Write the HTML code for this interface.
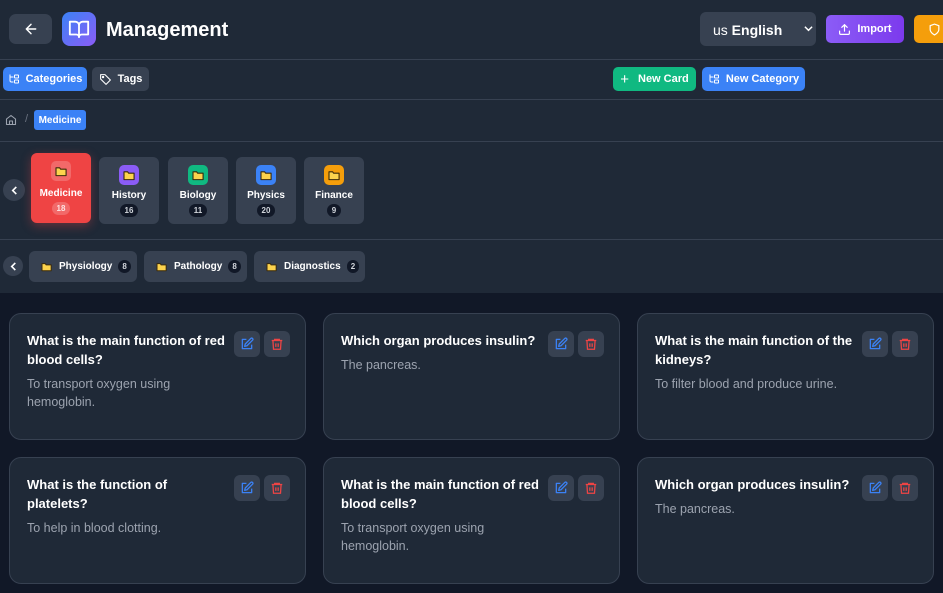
<!DOCTYPE html>
<html><head><meta charset="utf-8"><style>
*{box-sizing:border-box;margin:0;padding:0}
body{width:943px;height:593px;overflow:hidden;background:#111827;font-family:"Liberation Sans",sans-serif;color:#fff;position:relative}
.a{position:absolute}
.top{left:0;top:0;width:943px;height:293px;background:#1f2937}
.hl{left:0;width:943px;height:1px;background:#374151}
.btn{position:absolute;display:flex;align-items:center;justify-content:center;gap:6px;border-radius:5px;font-size:11px;font-weight:bold;color:#fff}
.cat{position:absolute;top:157px;width:60px;height:67px;background:#374151;border-radius:6px;text-align:center;font-size:10px;font-weight:bold}
.cat .ic{width:20px;height:20px;border-radius:5px;margin:8px auto 0;display:flex;align-items:center;justify-content:center}
.cat .nm{margin-top:5px}
.cat .ct{display:inline-block;margin-top:3px;background:#111827;border-radius:8px;font-size:8px;padding:2px 5px;color:#d1d5db}
.chip{position:absolute;top:251px;height:31px;background:#374151;border-radius:6px;display:flex;align-items:center;padding-left:12px;gap:6px;font-size:10px;font-weight:bold}
.chip .ct{background:#111827;border-radius:7px;font-size:8px;padding:2px 4px;color:#d1d5db}
.card{position:absolute;width:297px;background:#1f2937;border:1px solid #374151;border-radius:12px}
.card h3{position:absolute;left:17px;top:18px;width:210px;font-size:13px;line-height:18.5px;font-weight:bold;color:#fff}
.card p{position:absolute;left:17px;font-size:12.5px;line-height:18px;color:#9ca3af;width:200px}
.ib{position:absolute;top:17px;width:26px;height:26px;background:#374151;border-radius:6px;display:flex;align-items:center;justify-content:center}
.circ{position:absolute;border-radius:50%;background:#374151;display:flex;align-items:center;justify-content:center}
</style></head><body>
<div class="a top"></div>
<div class="a hl" style="top:59px"></div>
<div class="a hl" style="top:99px"></div>
<div class="a hl" style="top:141px"></div>
<div class="a hl" style="top:239px"></div>

<div class="btn" style="left:9px;top:14px;width:43px;height:30px;background:#374151;border-radius:7px"><svg width="16" height="16" viewBox="0 0 24 24" fill="none" stroke="#fff" stroke-width="2.2" stroke-linecap="round" stroke-linejoin="round"><path d="M19 12H5M12 19l-7-7 7-7"/></svg></div>
<div class="btn" style="left:62px;top:12px;width:34px;height:34px;border-radius:8px;background:linear-gradient(135deg,#3b82f6,#8b5cf6)"><svg width="22" height="22" viewBox="0 0 24 24" fill="none" stroke="#fff" stroke-width="2" stroke-linejoin="round"><path d="M2 4h6a4 4 0 0 1 4 4v13a3 3 0 0 0-3-3H2zM22 4h-6a4 4 0 0 0-4 4v13a3 3 0 0 1 3-3h7z"/></svg></div>
<div class="a" style="left:106px;top:19px;font-size:20px;font-weight:bold">Management</div>

<div class="a" style="left:700px;top:12px;width:116px;height:34px;background:#374151;border-radius:6px;font-size:14px;font-weight:bold;padding:10px 0 0 13px"><span style="font-weight:normal">us</span> English<svg class="a" style="left:104px;top:13px" width="9" height="7" viewBox="0 0 10 6" fill="none" stroke="#fff" stroke-width="1.6"><path d="M1 1l4 4 4-4"/></svg></div>
<div class="btn" style="left:826px;top:15px;width:78px;height:28px;background:linear-gradient(90deg,#8b5cf6,#7c3aed)"><svg width="13" height="13" viewBox="0 0 24 24" fill="none" stroke="#fff" stroke-width="2.2" stroke-linecap="round" stroke-linejoin="round"><path d="M21 15v4a2 2 0 0 1-2 2H5a2 2 0 0 1-2-2v-4M17 8l-5-5-5 5M12 3v12"/></svg>Import</div>
<div class="btn" style="left:914px;top:15px;width:40px;height:28px;background:#f59e0b;justify-content:flex-start;padding-left:14px"><svg width="13" height="13" viewBox="0 0 24 24" fill="none" stroke="#fff" stroke-width="2.2"><path d="M12 22s8-4 8-10V5l-8-3-8 3v7c0 6 8 10 8 10z"/></svg></div>

<div class="btn" style="left:3px;top:67px;width:84px;height:24px;background:#3b82f6"><svg width="12" height="12" viewBox="0 0 24 24" fill="none" stroke="#fff" stroke-width="2"><path d="M4 3v12a3 3 0 0 0 3 3h4M4 8h7"/><rect x="13" y="4" width="8" height="6" rx="1"/><rect x="13" y="14" width="8" height="6" rx="1"/></svg>Categories</div>
<div class="btn" style="left:92px;top:67px;width:57px;height:24px;background:#374151"><svg width="13" height="13" viewBox="0 0 24 24" fill="none" stroke="#fff" stroke-width="2" stroke-linejoin="round"><path d="M3 3h8l10 10-8 8L3 11z"/><circle cx="7.5" cy="7.5" r="1.2" fill="#fff"/></svg>Tags</div>
<div class="btn" style="left:613px;top:67px;width:83px;height:24px;background:#10b981"><span style="font-size:15px;font-weight:normal;margin-right:3px">+</span>New Card</div>
<div class="btn" style="left:702px;top:67px;width:103px;height:24px;background:#3b82f6"><svg width="12" height="12" viewBox="0 0 24 24" fill="none" stroke="#fff" stroke-width="2"><path d="M4 3v12a3 3 0 0 0 3 3h4M4 8h7"/><rect x="13" y="4" width="8" height="6" rx="1"/><rect x="13" y="14" width="8" height="6" rx="1"/></svg>New Category</div>

<svg class="a" style="left:5px;top:114px" width="12" height="12" viewBox="0 0 24 24" fill="none" stroke="#9ca3af" stroke-width="2.2" stroke-linejoin="round"><path d="M3 10l9-7 9 7v11H3zM9 21v-7h6v7"/></svg>
<div class="a" style="left:25px;top:113px;font-size:11px;color:#6b7280">/</div>
<div class="btn" style="left:34px;top:110px;width:52px;height:20px;background:#3b82f6;font-size:10px;border-radius:3px">Medicine</div>

<div class="circ" style="left:3px;top:179px;width:22px;height:22px"><svg width="9" height="9" viewBox="0 0 10 10" fill="none" stroke="#fff" stroke-width="1.8"><path d="M7 1L3 5l4 4"/></svg></div>
<div class="cat" style="left:31px;top:153px;height:70px;background:#ef4444;box-shadow:0 3px 10px rgba(239,68,68,.35)"><div class="ic" style="background:rgba(255,255,255,.2);width:20px;height:20px;margin-top:8px"><svg width="13" height="11" viewBox="0 0 14 12"><path d="M1 2h4l1 1.5h6v7H1z" fill="#fcd34d" stroke="#3b2a0a" stroke-width="1.2" stroke-linejoin="round"/></svg></div><div class="nm" style="margin-top:7px">Medicine</div><div class="ct" style="background:rgba(255,255,255,.2);color:#fde2e2">18</div></div>
<div class="cat" style="left:99px"><div class="ic" style="background:#8b5cf6"><svg width="13" height="11" viewBox="0 0 14 12"><path d="M1 2h4l1 1.5h6v7H1z" fill="#fcd34d" stroke="#3b2a0a" stroke-width="1.2" stroke-linejoin="round"/></svg></div><div class="nm">History</div><div class="ct">16</div></div>
<div class="cat" style="left:168px"><div class="ic" style="background:#10b981"><svg width="13" height="11" viewBox="0 0 14 12"><path d="M1 2h4l1 1.5h6v7H1z" fill="#fcd34d" stroke="#3b2a0a" stroke-width="1.2" stroke-linejoin="round"/></svg></div><div class="nm">Biology</div><div class="ct">11</div></div>
<div class="cat" style="left:236px"><div class="ic" style="background:#3b82f6"><svg width="13" height="11" viewBox="0 0 14 12"><path d="M1 2h4l1 1.5h6v7H1z" fill="#fcd34d" stroke="#3b2a0a" stroke-width="1.2" stroke-linejoin="round"/></svg></div><div class="nm">Physics</div><div class="ct">20</div></div>
<div class="cat" style="left:304px"><div class="ic" style="background:#f59e0b"><svg width="13" height="11" viewBox="0 0 14 12"><path d="M1 2h4l1 1.5h6v7H1z" fill="#fcd34d" stroke="#3b2a0a" stroke-width="1.2" stroke-linejoin="round"/></svg></div><div class="nm">Finance</div><div class="ct">9</div></div>

<div class="circ" style="left:3px;top:256px;width:20px;height:20px"><svg width="9" height="9" viewBox="0 0 10 10" fill="none" stroke="#fff" stroke-width="1.8"><path d="M7 1L3 5l4 4"/></svg></div>
<div class="chip" style="left:29px;width:108px"><svg width="12" height="10" viewBox="0 0 14 12"><path d="M1 2h4l1 1.5h6v7H1z" fill="#fcd34d" stroke="#3b2a0a" stroke-width="1.2" stroke-linejoin="round"/></svg>Physiology<span class="ct">8</span></div>
<div class="chip" style="left:144px;width:103px"><svg width="12" height="10" viewBox="0 0 14 12"><path d="M1 2h4l1 1.5h6v7H1z" fill="#fcd34d" stroke="#3b2a0a" stroke-width="1.2" stroke-linejoin="round"/></svg>Pathology<span class="ct">8</span></div>
<div class="chip" style="left:254px;width:111px"><svg width="12" height="10" viewBox="0 0 14 12"><path d="M1 2h4l1 1.5h6v7H1z" fill="#fcd34d" stroke="#3b2a0a" stroke-width="1.2" stroke-linejoin="round"/></svg>Diagnostics<span class="ct">2</span></div>

<!-- cards -->
<div class="card" style="left:9px;top:313px;height:127px"><h3>What is the main function of red blood cells?</h3><p style="top:61px">To transport oxygen using hemoglobin.</p>
<div class="ib" style="left:224px"><svg width="14" height="14" viewBox="0 0 24 24" fill="none" stroke="#3b82f6" stroke-width="2.2" stroke-linejoin="round"><path d="M11 4H4v16h16v-7"/><path d="M18.5 2.5a2.1 2.1 0 0 1 3 3L12 15l-4 1 1-4z"/></svg></div>
<div class="ib" style="left:254px"><svg width="14" height="14" viewBox="0 0 24 24" fill="none" stroke="#ef4444" stroke-width="2.2"><path d="M3 6h18M8 6V4h8v2M5 6l1 15h12l1-15M10 11v6M14 11v6"/></svg></div></div>
<div class="card" style="left:323px;top:313px;height:127px"><h3>Which organ produces insulin?</h3><p style="top:42px">The pancreas.</p>
<div class="ib" style="left:224px"><svg width="14" height="14" viewBox="0 0 24 24" fill="none" stroke="#3b82f6" stroke-width="2.2" stroke-linejoin="round"><path d="M11 4H4v16h16v-7"/><path d="M18.5 2.5a2.1 2.1 0 0 1 3 3L12 15l-4 1 1-4z"/></svg></div>
<div class="ib" style="left:254px"><svg width="14" height="14" viewBox="0 0 24 24" fill="none" stroke="#ef4444" stroke-width="2.2"><path d="M3 6h18M8 6V4h8v2M5 6l1 15h12l1-15M10 11v6M14 11v6"/></svg></div></div>
<div class="card" style="left:637px;top:313px;height:127px"><h3>What is the main function of the kidneys?</h3><p style="top:61px;width:240px">To filter blood and produce urine.</p>
<div class="ib" style="left:224px"><svg width="14" height="14" viewBox="0 0 24 24" fill="none" stroke="#3b82f6" stroke-width="2.2" stroke-linejoin="round"><path d="M11 4H4v16h16v-7"/><path d="M18.5 2.5a2.1 2.1 0 0 1 3 3L12 15l-4 1 1-4z"/></svg></div>
<div class="ib" style="left:254px"><svg width="14" height="14" viewBox="0 0 24 24" fill="none" stroke="#ef4444" stroke-width="2.2"><path d="M3 6h18M8 6V4h8v2M5 6l1 15h12l1-15M10 11v6M14 11v6"/></svg></div></div>

<div class="card" style="left:9px;top:457px;height:127px"><h3 style="width:170px">What is the function of platelets?</h3><p style="top:61px">To help in blood clotting.</p>
<div class="ib" style="left:224px"><svg width="14" height="14" viewBox="0 0 24 24" fill="none" stroke="#3b82f6" stroke-width="2.2" stroke-linejoin="round"><path d="M11 4H4v16h16v-7"/><path d="M18.5 2.5a2.1 2.1 0 0 1 3 3L12 15l-4 1 1-4z"/></svg></div>
<div class="ib" style="left:254px"><svg width="14" height="14" viewBox="0 0 24 24" fill="none" stroke="#ef4444" stroke-width="2.2"><path d="M3 6h18M8 6V4h8v2M5 6l1 15h12l1-15M10 11v6M14 11v6"/></svg></div></div>
<div class="card" style="left:323px;top:457px;height:127px"><h3>What is the main function of red blood cells?</h3><p style="top:61px">To transport oxygen using hemoglobin.</p>
<div class="ib" style="left:224px"><svg width="14" height="14" viewBox="0 0 24 24" fill="none" stroke="#3b82f6" stroke-width="2.2" stroke-linejoin="round"><path d="M11 4H4v16h16v-7"/><path d="M18.5 2.5a2.1 2.1 0 0 1 3 3L12 15l-4 1 1-4z"/></svg></div>
<div class="ib" style="left:254px"><svg width="14" height="14" viewBox="0 0 24 24" fill="none" stroke="#ef4444" stroke-width="2.2"><path d="M3 6h18M8 6V4h8v2M5 6l1 15h12l1-15M10 11v6M14 11v6"/></svg></div></div>
<div class="card" style="left:637px;top:457px;height:127px"><h3>Which organ produces insulin?</h3><p style="top:42px">The pancreas.</p>
<div class="ib" style="left:224px"><svg width="14" height="14" viewBox="0 0 24 24" fill="none" stroke="#3b82f6" stroke-width="2.2" stroke-linejoin="round"><path d="M11 4H4v16h16v-7"/><path d="M18.5 2.5a2.1 2.1 0 0 1 3 3L12 15l-4 1 1-4z"/></svg></div>
<div class="ib" style="left:254px"><svg width="14" height="14" viewBox="0 0 24 24" fill="none" stroke="#ef4444" stroke-width="2.2"><path d="M3 6h18M8 6V4h8v2M5 6l1 15h12l1-15M10 11v6M14 11v6"/></svg></div></div>
</body></html>
